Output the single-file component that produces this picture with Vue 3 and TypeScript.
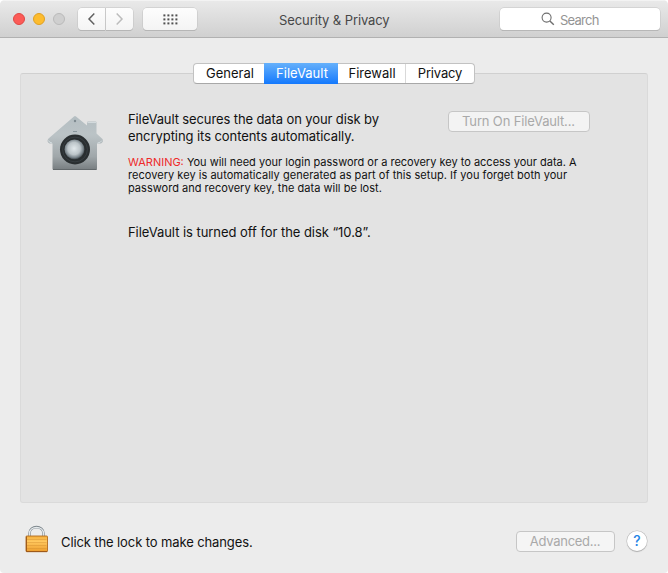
<script setup lang="ts">
import { ref } from 'vue'

interface Tab {
  id: string
  label: string
}

const tabs: Tab[] = [
  { id: 'general', label: 'General' },
  { id: 'filevault', label: 'FileVault' },
  { id: 'firewall', label: 'Firewall' },
  { id: 'privacy', label: 'Privacy' },
]
const active = ref('filevault')
const gridCols = [0, 4, 8, 12]
const gridRows = [0, 4, 8]
</script>

<template>
  <div class="window">
    <header class="toolbar">
      <div class="lights">
        <span class="light close"></span>
        <span class="light minimize"></span>
        <span class="light zoom"></span>
      </div>
      <div class="nav">
        <button class="tool back" aria-label="Back">
          <svg width="9" height="14" viewBox="0 0 9 14"><path d="M7.300 1.500 L2 7 L7.300 12.500" fill="none" stroke="#606060" stroke-width="1.5" /></svg>
        </button>
        <button class="tool forward" aria-label="Forward">
          <svg width="9" height="14" viewBox="0 0 9 14"><path d="M1.700 1.500 L7 7 L1.700 12.500" fill="none" stroke="#bcbcbc" stroke-width="1.5" /></svg>
        </button>
      </div>
      <button class="tool all" aria-label="Show All">
        <svg width="15" height="11" viewBox="0 0 15 11">
          <template v-for="y in gridRows" :key="y">
            <rect v-for="x in gridCols" :key="x" :x="x + 0.4" :y="y + 0.4" width="2" height="2" fill="#505050" />
          </template>
        </svg>
      </button>
      <h1 class="title">Security &amp; Privacy</h1>
      <div class="search">
        <svg width="14" height="14" viewBox="0 0 14 14"><circle cx="5.6" cy="5.6" r="4.5" fill="none" stroke="#6e6e6e" stroke-width="1.1" /><path d="M8.9 8.9 L12.8 12.8" stroke="#6e6e6e" stroke-width="1.4" /></svg>
        <span class="placeholder">Search</span>
      </div>
    </header>

    <main class="content">
      <nav class="tabs">
        <button v-for="tab in tabs" :key="tab.id" class="tab" :class="[tab.id, { active: active === tab.id }]" @click="active = tab.id"><span>{{ tab.label }}</span></button>
      </nav>
      <section class="panel">
        <svg class="vault" width="60" height="60" viewBox="0 0 60 60">
          <defs>
            <linearGradient id="house" x1="0" y1="0" x2="0" y2="1">
              <stop offset="0" stop-color="#b4bec2" />
              <stop offset="0.35" stop-color="#bbc3c6" />
              <stop offset="0.75" stop-color="#a0a7aa" />
              <stop offset="1" stop-color="#777d80" />
            </linearGradient>
            <radialGradient id="knob" cx="0.48" cy="0.45" r="0.56">
              <stop offset="0" stop-color="#e2e9ec" />
              <stop offset="0.55" stop-color="#bcc5c9" />
              <stop offset="0.82" stop-color="#78838a" />
              <stop offset="1" stop-color="#32393c" />
            </radialGradient>
          </defs>
          <path d="M30 1.500 Q31 0.700 32 1.500 L43 10.500 V7.500 Q43 6.500 44 6.500 H51.500 Q52.500 6.500 52.500 7.500 V18.500 L58.500 24 Q60 26.500 57 28.500 H53 V53.500 Q53 55 51.500 55 H10 Q8.500 55 8.500 53.500 V28.500 H5.500 Q2 26.500 4.500 23.500 Z" fill="url(#house)" />
          <path d="M4.500 25.500 Q5 27.500 8 28 M53.500 28 Q57 27.500 58 25.500" fill="none" stroke="#d4dde0" stroke-width="1" />
          <path d="M43.500 7.500 H52" stroke="#d3dadd" stroke-width="1.200" />
          <path d="M9 54.500 H52.500" stroke="#62686b" stroke-width="1" />
          <circle cx="31" cy="6" r="1.200" fill="#7e8a90" />
          <path d="M29 16.500 H33" stroke="#88969c" stroke-width="1.200" />
          <circle cx="31" cy="34.500" r="15" fill="#292e30" />
          <circle cx="31" cy="34.500" r="12.400" fill="none" stroke="#3c4448" stroke-width="0.700" />
          <circle cx="30.500" cy="34.500" r="10" fill="url(#knob)" />
        </svg>
        <div class="details">
          <div class="intro">
            <p class="body lead"><span class="l1">FileVault secures the data on your disk by</span><br /><span class="l2">encrypting its contents automatically.</span></p>
            <button class="push turn-on" disabled><span>Turn On FileVault...</span></button>
          </div>
          <p class="warning"><span class="w1"><span class="red">WARNING:</span> You will need your login password or a recovery key to access your data. A</span><br /><span class="w2">recovery key is automatically generated as part of this setup. If you forget both your</span><br /><span class="w3">password and recovery key, the data will be lost.</span></p>
          <p class="body status">FileVault is turned off for the disk “10.8”.</p>
        </div>
      </section>
    </main>

    <footer class="footer">
      <svg class="lock" width="24" height="28" viewBox="0 0 24 28">
        <defs>
          <linearGradient id="brass" x1="0" y1="0" x2="0" y2="1">
            <stop offset="0" stop-color="#f4ad3a" />
            <stop offset="0.35" stop-color="#ffc85f" />
            <stop offset="1" stop-color="#ed9d2d" />
          </linearGradient>
        </defs>
        <path d="M4.500 12 V8.500 C4.500 0 18.500 0 18.500 8.500 V12" fill="none" stroke="#7d868c" stroke-width="2.600" />
        <path d="M4.500 12 V8.500 C4.500 0.500 18.500 0.500 18.500 8.500 V12" fill="none" stroke="#e4e9ec" stroke-width="1.500" />
        <rect x="1" y="11" width="21.500" height="15.700" rx="0.800" fill="url(#brass)" stroke="#b26b1e" stroke-width="0.900" />
        <path d="M2 14.500 H21.500 M2 17.500 H21.500 M2 20.500 H21.500 M2 23.500 H21.500" stroke="#cd862a" stroke-width="0.700" opacity="0.500" />
        <path d="M1.500 11.500 V26.500 H22" fill="none" stroke="#985518" stroke-width="0.900" />
      </svg>
      <p class="body lock-text">Click the lock to make changes.</p>
      <button class="push advanced" disabled><span>Advanced...</span></button>
      <button class="help"><span>?</span></button>
    </footer>
  </div>
</template>

<style>
body {
  background: #fff;
}
</style>

<style scoped>
* {
  box-sizing: border-box;
}
.window {
  width: 668px;
  height: 573px;
  display: flex;
  flex-direction: column;
  overflow: hidden;
  border-radius: 5px 5px 4px 4px;
  background: #ececec;
  font-family: Inter, "Liberation Sans", sans-serif;
  font-size: 13px;
  color: #111;
}
button {
  margin: 0;
  padding: 0;
  font: inherit;
  border: 0;
}
p, h1 {
  margin: 0;
  font-weight: 400;
  white-space: nowrap;
}
.toolbar {
  flex: none;
  height: 38px;
  display: flex;
  align-items: flex-start;
  padding-left: 13px;
  background: linear-gradient(#e9e9e9, #d0d0d0);
  border-top: 1px solid #f3f3f3;
  border-bottom: 1px solid #b1b1b1;
}
.lights {
  display: flex;
  gap: 8px;
  padding-top: 12px;
  width: 65px;
}
.light {
  width: 12px;
  height: 12px;
  border-radius: 50%;
  border: 1px solid;
}
.close { background: #fc5b57; border-color: #df4844; }
.minimize { background: #fdbc2e; border-color: #dfa023; }
.zoom { background: #cfcfcf; border-color: #bababa; }
.nav {
  display: flex;
  gap: 1px;
  margin: 7px 10px 0 0;
}
.tool {
  display: flex;
  align-items: center;
  justify-content: center;
  height: 22px;
  background: linear-gradient(#fdfdfd, #f4f4f4);
  box-shadow: 0 0 0 0.5px #c2c2c2, 0 1px 0 #aaa;
}
.back { width: 27px; border-radius: 4px 0 0 4px; }
.forward { width: 27px; border-radius: 0 4px 4px 0; }
.all { width: 54px; margin-top: 7px; border-radius: 4px; }
.title {
  width: 111px;
  margin: 11px 0 0 82px;
  font-size: 13px;
  line-height: 16px;
  letter-spacing: -0.1px;
  color: #474747;
}
.search {
  display: flex;
  align-items: center;
  width: 160px;
  height: 22px;
  margin: 7px 0 0 110px;
  padding-left: 41px;
  gap: 5px;
  border-radius: 4px;
  background: #fff;
  box-shadow: 0 0 0 0.5px #c4c4c4, 0 1px 0 #aaa;
  color: #949494;
}
.placeholder { position: relative; top: 1px; letter-spacing: -0.75px; }
.content {
  display: flex;
  flex-direction: column;
  align-items: center;
  padding: 25px 20px 0;
}
.tabs {
  z-index: 1;
  display: flex;
  width: 282px;
  height: 21px;
  margin-bottom: -11px;
  border: 1px solid #c2c2c2;
  border-bottom-color: #a8a8a8;
  border-radius: 4px;
  background: #fff;
}
.tab {
  height: 19px;
  line-height: 19px;
  background: transparent;
  color: #111;
  text-align: center;
}
.general { width: 70px; padding-left: 2px; }
.filevault { width: 74px; padding-left: 2px; }
.firewall { width: 68px; padding-left: 1px; border-right: 1px solid #d9d9d9; }
.privacy { width: 68px; letter-spacing: -0.15px; }
.tab.active {
  height: 21px;
  margin-top: -1px;
  line-height: 21px;
  color: #fff;
  background: linear-gradient(#65b0fb, #1479fd);
}
.panel {
  display: flex;
  align-items: flex-start;
  width: 628px;
  height: 430px;
  padding: 37px 0 0 23px;
  border: 1px solid #dadada;
  border-top-color: #d0d0d0;
  border-radius: 3px;
  background: #e3e3e3;
}
.vault { margin-top: 4px; flex: none; }
.details {
  display: flex;
  flex-direction: column;
  padding-left: 24px;
}
.intro { display: flex; align-items: flex-start; }
.body { font-size: 13px; line-height: 17px; }
.lead { width: 320px; }
.l1 { letter-spacing: -0.11px; }
.l2 { letter-spacing: -0.07px; }
.w2 { letter-spacing: 0.035px; }
.w3 { letter-spacing: 0.02px; }
.push {
  height: 21px;
  line-height: 19px;
  border: 1px solid #c6c6c6;
  border-radius: 4px;
  background: #f3f3f3;
  color: #a9a9a9;
  text-align: center;
}
.turn-on { width: 142px; padding-right: 1px; letter-spacing: -0.15px; }
.warning {
  margin-top: 11px;
  font-size: 11px;
  line-height: 13px;
}
.red { color: #ee2a2a; }
.status { margin-top: 29px; letter-spacing: -0.05px; }
.footer {
  display: flex;
  align-items: flex-start;
  padding: 22px 0 0 25px;
}
.lock { flex: none; }
.lock-text { padding: 9px 0 0 12px; flex: 0 0 467px; letter-spacing: -0.11px; }
.advanced { width: 99px; margin-top: 6px; padding-right: 1px; background: #f5f5f5; letter-spacing: -0.27px; }
.help {
  width: 20px;
  height: 20px;
  margin: 6px 0 0 12px;
  border-radius: 50%;
  background: #fff;
  box-shadow: 0 0 0 0.5px #b8b8b8, 0 1px 1px #aaa;
  color: #2484e5;
  font-size: 14px;
  line-height: 20px;
  font-weight: 500;
}
</style>
